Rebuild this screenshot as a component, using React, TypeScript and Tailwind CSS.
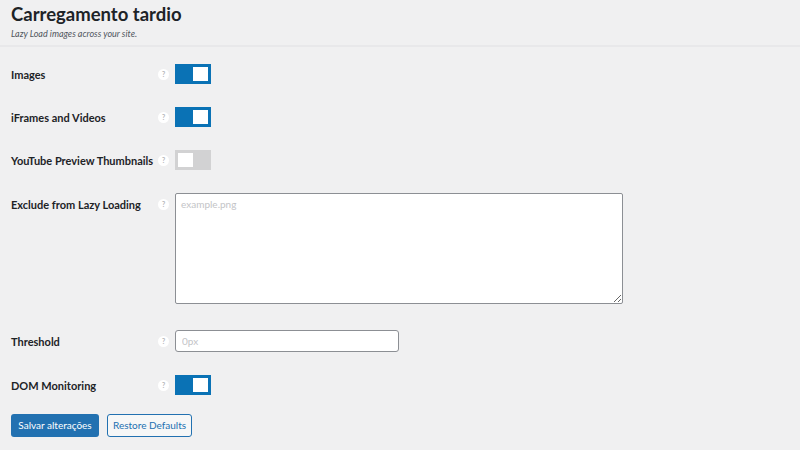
import React from "react";

function Help() {
  return (
    <span className="flex items-center justify-center w-[11px] h-[11px] rounded-full bg-white text-[7px] leading-none font-bold text-[#b4b5b8] shrink-0">
      ?
    </span>
  );
}

function Toggle({ on }: { on: boolean }) {
  return (
    <div
      className={
        on
          ? "w-[36px] h-[20px] bg-[#0a72b5] flex items-center justify-end pr-[3px]"
          : "w-[36px] h-[20px] bg-[#d2d2d3] flex items-center justify-start pl-[3px]"
      }
    >
      <div className="w-[15px] h-[14px] bg-white" />
    </div>
  );
}

function Row({
  label,
  children,
  top = false,
}: {
  label: string;
  children: React.ReactNode;
  top?: boolean;
}) {
  return (
    <div className={top ? "flex items-start" : "flex items-center"}>
      <div className={top ? "w-[146px] pt-[4px] flex" : "w-[146px] flex items-center"}>
        <span className="text-[11px] font-bold text-[#1d2327] leading-[15px] whitespace-nowrap">
          {label}
        </span>
      </div>
      <div className={top ? "w-[18px] pt-[6px] pl-[1px] flex" : "w-[18px] pl-[1px] flex items-center"}>
        <Help />
      </div>
      {children}
    </div>
  );
}

export default function App() {
  return (
    <div
      className="w-[800px] h-[450px] bg-[#f0f0f1] overflow-hidden"
      style={{ fontFamily: 'Lato, "Open Sans", sans-serif' }}
    >
      {/* Header */}
      <div className="px-[11px] pt-[2px] pb-[5px] border-b-2 border-[#e8e8ea]">
        <h1 className="text-[18.5px] font-bold text-[#1d2327] leading-[25px]">
          Carregamento tardio
        </h1>
        <p className="text-[9px] italic text-[#50575e] leading-[12px] mt-[1px]">
          Lazy Load images across your site.
        </p>
      </div>

      {/* Settings */}
      <div className="flex flex-col px-[11px] pt-[17px]">
        <Row label="Images">
          <Toggle on />
        </Row>
        <div className="mt-[23px]">
          <Row label="iFrames and Videos">
            <Toggle on />
          </Row>
        </div>
        <div className="mt-[23px]">
          <Row label="YouTube Preview Thumbnails">
            <Toggle on={false} />
          </Row>
        </div>
        <div className="mt-[23px] flex">
          <Row label="Exclude from Lazy Loading" top>
            <textarea
              placeholder="example.png"
              className="block w-[448px] h-[111px] bg-white border border-[#8c8f94] rounded-[2px] px-[5px] py-[3px] text-[10px] text-[#1d2327] placeholder:text-[#c3c4c7] outline-none"
            />
          </Row>
        </div>
        <div className="mt-[26px]">
          <Row label="Threshold">
            <input
              placeholder="0px"
              className="w-[224px] h-[22px] bg-white border border-[#8c8f94] rounded-[3px] px-[6px] text-[10px] placeholder:text-[#c3c4c7] outline-none"
            />
          </Row>
        </div>
        <div className="mt-[23px]">
          <Row label="DOM Monitoring">
            <Toggle on />
          </Row>
        </div>

        {/* Buttons */}
        <div className="flex gap-[8px] mt-[19px]">
          <button className="w-[88px] h-[23px] bg-[#2271b1] text-white text-[10px] rounded-[3px]">
            Salvar alterações
          </button>
          <button className="w-[85px] h-[23px] bg-[#f6f7f7] border border-[#2271b1] text-[#2271b1] text-[10px] rounded-[3px]">
            Restore Defaults
          </button>
        </div>
      </div>
    </div>
  );
}
